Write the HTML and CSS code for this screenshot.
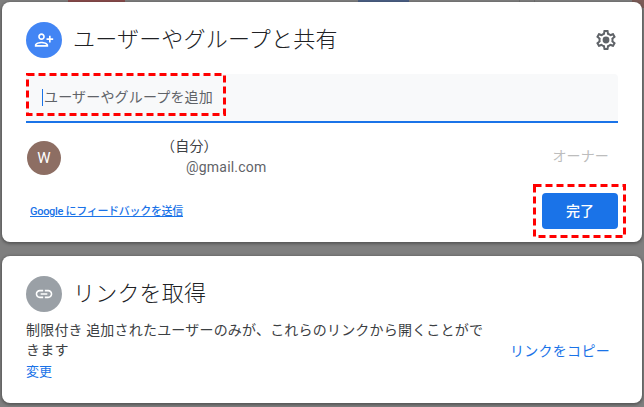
FILE: index.html
```html
<!DOCTYPE html>
<html lang="ja">
<head>
<meta charset="utf-8">
<title>ユーザーやグループと共有</title>
<link rel="stylesheet" href="styles.css">
</head>
<body>
<div class="behind" aria-hidden="true">
  <span class="bar bar-red"></span>
  <span class="bar bar-blue"></span>
  <span class="bar bar-line-a"></span>
  <span class="bar bar-line-b"></span>
  <span class="blob"></span>
</div>
<section class="card card-share">
  <header class="head">
    <span class="disc disc-blue">
      <svg class="icon-person" viewBox="0 0 24 24"><path d="M13 8c0-2.21-1.79-4-4-4S5 5.79 5 8s1.79 4 4 4 4-1.79 4-4zm-2 0c0 1.1-.9 2-2 2s-2-.9-2-2 .9-2 2-2 2 .9 2 2zM1 18v2h16v-2c0-2.66-5.33-4-8-4s-8 1.34-8 4zm2 0c.2-.71 3.3-2 6-2 2.69 0 5.77 1.28 6 2H3zm17-3v-3h3v-2h-3V7h-2v3h-3v2h3v3h2z"/></svg>
    </span>
    <h1 class="title">ユーザーやグループと共有</h1>
    <svg class="icon-gear" viewBox="0 0 24 24"><path d="M19.43 12.98c.04-.32.07-.64.07-.98 0-.34-.03-.66-.07-.98l2.11-1.65c.19-.15.24-.42.12-.64l-2-3.46c-.09-.16-.26-.25-.44-.25-.06 0-.12.01-.17.03l-2.49 1c-.52-.4-1.08-.73-1.69-.98l-.38-2.65C14.46 2.18 14.25 2 14 2h-4c-.25 0-.46.18-.49.42l-.38 2.65c-.61.25-1.17.59-1.69.98l-2.49-1c-.06-.02-.12-.03-.18-.03-.17 0-.34.09-.43.25l-2 3.46c-.13.22-.07.49.12.64l2.11 1.65c-.04.32-.07.65-.07.98 0 .33.03.66.07.98l-2.11 1.65c-.19.15-.24.42-.12.64l2 3.46c.09.16.26.25.44.25.06 0 .12-.01.17-.03l2.49-1c.52.4 1.08.73 1.69.98l.38 2.65c.03.24.24.42.49.42h4c.25 0 .46-.18.49-.42l.38-2.65c.61-.25 1.17-.59 1.69-.98l2.49 1c.06.02.12.03.18.03.17 0 .34-.09.43-.25l2-3.46c.12-.22.07-.49-.12-.64l-2.11-1.65zm-1.98-1.71c.04.31.05.52.05.73 0 .21-.02.43-.05.73l-.14 1.13.89.7 1.08.84-.7 1.21-1.27-.51-1.04-.42-.9.68c-.43.32-.84.56-1.25.73l-1.06.43-.16 1.13-.2 1.35h-1.4l-.19-1.35-.16-1.13-1.06-.43c-.43-.18-.83-.41-1.23-.71l-.91-.7-1.06.43-1.27.51-.7-1.21 1.08-.84.89-.7-.14-1.13c-.03-.31-.05-.54-.05-.74s.02-.43.05-.73l.14-1.13-.89-.7-1.08-.84.7-1.21 1.27.51 1.04.42.9-.68c.43-.32.84-.56 1.25-.73l1.06-.43.16-1.13.2-1.35h1.39l.19 1.35.16 1.13 1.06.43c.43.18.83.41 1.23.71l.91.7 1.06-.43 1.27-.51.7 1.21-1.07.85-.89.7.14 1.13z"/><circle cx="12" cy="12" r="3.4"/></svg>
  </header>
  <div class="field">
    <span class="caret"></span>
    <span class="placeholder">ユーザーやグループを追加</span>
  </div>
  <div class="person">
    <span class="avatar">W</span>
    <div class="who">
      <div class="who-name">（自分）</div>
      <div class="who-mail">@gmail.com</div>
    </div>
    <span class="role">オーナー</span>
  </div>
  <footer class="foot">
    <a class="feedback">Google にフィードバックを送信</a>
    <button class="done">完了</button>
  </footer>
  <svg class="mark mark-field" viewBox="0 0 200 43"><rect x="1.5" y="1.5" width="197" height="40"/></svg>
  <svg class="mark mark-done" viewBox="0 0 93 54"><rect x="1.5" y="1.5" width="90" height="51"/></svg>
</section>
<section class="card card-link">
  <header class="head">
    <span class="disc disc-gray">
      <svg class="icon-link" viewBox="0 0 24 24"><path d="M3.9 12c0-1.71 1.39-3.1 3.1-3.1h4V7H7c-2.76 0-5 2.24-5 5s2.24 5 5 5h4v-1.9H7c-1.71 0-3.1-1.39-3.1-3.1zM8 13h8v-2H8v2zm9-6h-4v1.9h4c1.71 0 3.1 1.39 3.1 3.1s-1.39 3.1-3.1 3.1h-4V17h4c2.76 0 5-2.24 5-5s-2.24-5-5-5z"/></svg>
    </span>
    <h2 class="title">リンクを取得</h2>
  </header>
  <div class="link-body">
    <div class="link-text">
      <p class="desc">制限付き 追加されたユーザーのみが、これらのリンクから開くことができます</p>
      <a class="change">変更</a>
    </div>
    <a class="copy">リンクをコピー</a>
  </div>
</section>
</body>
</html>
```
FILE: styles.css
```css
* { box-sizing: border-box; }
html, body { margin: 0; padding: 0; }
body {
  width: 644px;
  height: 407px;
  padding: 2px;
  overflow: hidden;
  position: relative;
  background: #7f7f7f;
  font-family: Roboto, "Noto Sans CJK JP", sans-serif;
  color: #202124;
}
.behind { position: absolute; inset: 0; }
.bar { position: absolute; top: 0; height: 2px; }
.bar-red { left: 68px; width: 57px; background: #8a4a4a; }
.bar-blue { left: 358px; width: 51px; background: #4a5f86; }
.bar-line-a { left: 519px; width: 1px; background: #717171; }
.bar-line-b { left: 534px; width: 1px; background: #717171; }
.blob { position: absolute; right: 0; top: 0; width: 12px; height: 8px; background: #7d5c58; }
.card {
  position: relative;
  width: 640px;
  background: #fff;
  border-radius: 8px;
  box-shadow: 0 1px 3px 1px rgba(40, 40, 40, .45);
  padding: 20px 24px 0;
}
.card-share { height: 240px; margin-bottom: 14px; }
.card-link { height: 147px; }
.head { display: flex; align-items: center; height: 36px; }
.disc {
  flex: none;
  width: 36px;
  height: 36px;
  border-radius: 50%;
  display: flex;
  align-items: center;
  justify-content: center;
  margin-right: 12px;
}
.disc-blue { background: #4285f4; }
.disc-gray { background: #9aa0a6; }
.disc svg { fill: #fff; }
.icon-person { width: 20px; height: 20px; }
.icon-link { width: 20px; height: 20px; }
.title {
  margin: 0 0 0 -1px;
  flex: 1;
  align-self: flex-start;
  font: 300 22px/30px "Noto Sans CJK JP", sans-serif;
  letter-spacing: .2px;
  color: #202124;
}
.icon-gear { width: 24px; height: 24px; fill: #5f6368; }
.field {
  margin-top: 16px;
  height: 49px;
  background: #f8f9fa;
  border-bottom: 2px solid #1a73e8;
  border-radius: 4px 4px 0 0;
  display: flex;
  align-items: center;
  padding-left: 16px;
}
.caret { width: 1px; height: 17px; background: #1a73e8; margin-right: 1px; }
.placeholder {
  margin-bottom: 4px;
  font: 14px/20px "Noto Sans CJK JP", sans-serif;
  letter-spacing: .17px;
  color: #5f6368;
}
.person { margin-top: 18px; display: flex; align-items: center; height: 34px; padding-left: 1px; }
.avatar {
  flex: none;
  width: 34px;
  height: 34px;
  border-radius: 50%;
  background: #8d6e63;
  color: #fff;
  font: 400 15px/34px Roboto, sans-serif;
  text-align: center;
}
.who { flex: 1; padding-left: 100px; margin-bottom: 4px; }
.who-name { margin-bottom: 2px; font: 14px/20px "Noto Sans CJK JP", sans-serif; letter-spacing: .2px; color: #3c4043; }
.who-mail { font: 14px/20px Roboto, sans-serif; letter-spacing: .2px; color: #5f6368; padding-left: 25px; }
.role { margin: 0 9px 6px 0; font: 14px/20px "Noto Sans CJK JP", sans-serif; letter-spacing: .15px; color: #bdbdbd; }
.foot { margin-top: 18px; display: flex; align-items: center; justify-content: space-between; height: 36px; padding-left: 4px; }
.feedback {
  margin-top: 2px;
  font: 500 11px/14px Roboto, "Noto Sans CJK JP", sans-serif;
  letter-spacing: -.3px;
  color: #1a73e8;
  text-decoration: underline;
}
.done {
  width: 76px;
  height: 36px;
  border: 0;
  border-radius: 4px;
  background: #1a73e8;
  color: #fff;
  font: 500 14px/20px "Noto Sans CJK JP", sans-serif;
  padding: 0 0 2px;
}
.mark { position: absolute; fill: none; stroke: #f00; stroke-width: 3; stroke-dasharray: 7 4; }
.mark-field { left: 24px; top: 71px; width: 200px; height: 43px; }
.mark-done { left: 531px; top: 182px; width: 93px; height: 54px; }
.link-body { margin-top: 7px; display: flex; justify-content: space-between; align-items: center; }
.link-text { width: 470px; }
.desc { margin: 0; font: 14px/20px "Noto Sans CJK JP", sans-serif; letter-spacing: .2px; color: #3c4043; }
.change { display: block; margin-top: 3px; font: 13px/18px "Noto Sans CJK JP", sans-serif; color: #1a73e8; }
.copy { margin-right: 8px; font: 14px/20px "Noto Sans CJK JP", sans-serif; letter-spacing: .3px; color: #1a73e8; }
```
